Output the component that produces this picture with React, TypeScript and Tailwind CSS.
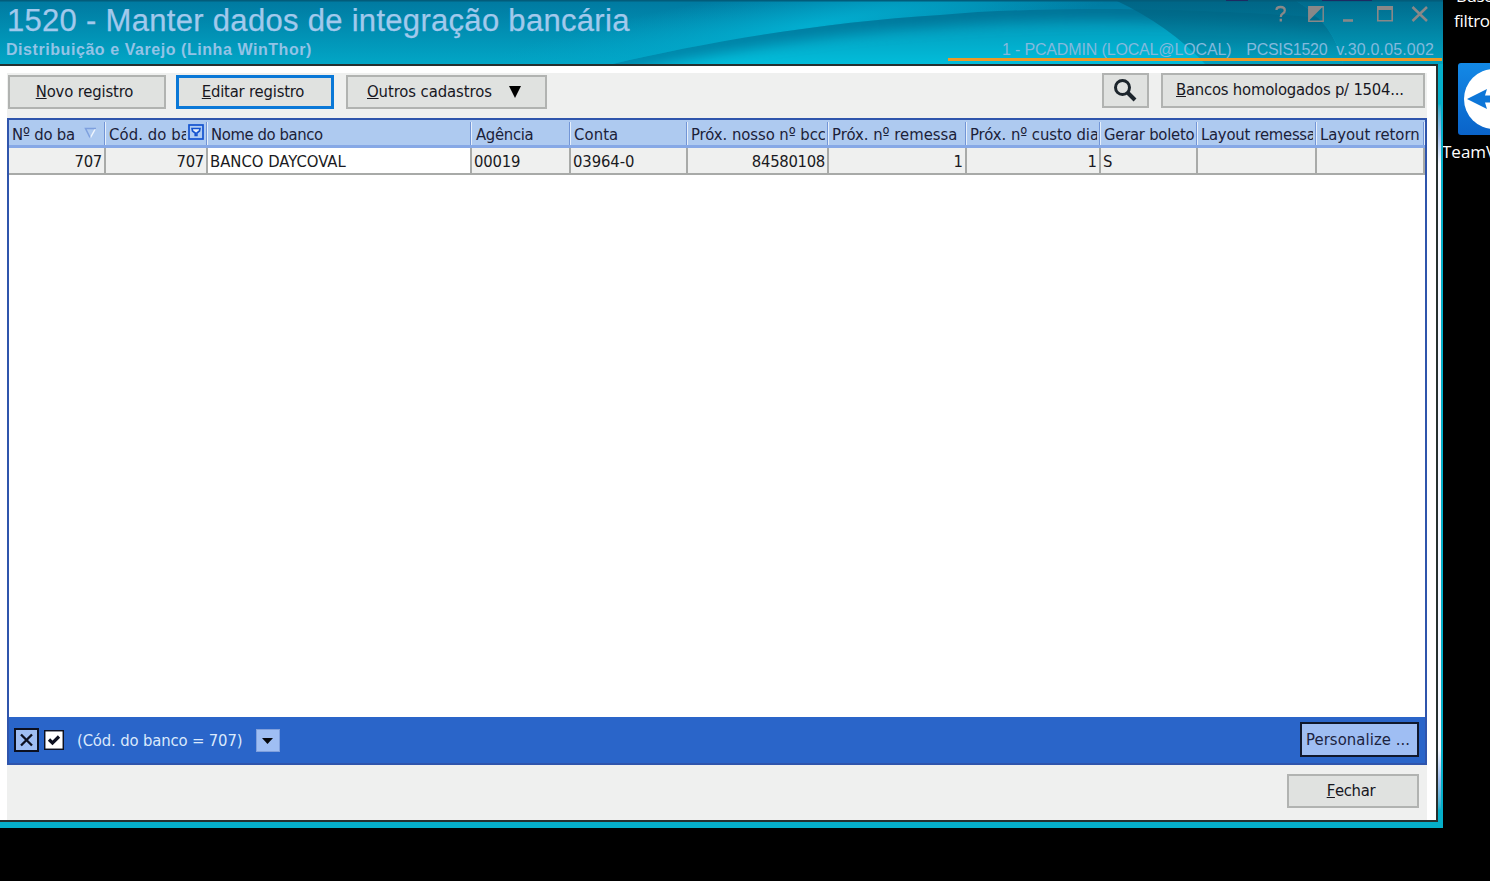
import { ReactNode } from "react";

const ui = "font-['DejaVu_Sans_Condensed','DejaVu_Sans',sans-serif] [font-stretch:condensed] text-[16.5px] whitespace-pre leading-[20px]";

function Button({ className, children }: { className: string; children: ReactNode }) {
  return (
    <button className={`flex items-center box-border bg-[#e0e2e0] pb-px text-[#17171f] ${ui} ${className}`}>
      {children}
    </button>
  );
}

type Column = { title: string; value: string; cell: string; head: string; row: string; icon?: "sort" | "filter" };

const columns: Column[] = [
  { title: "Nº do ba", value: "707", cell: "w-[97px]", head: "mr-[3px] tracking-[-0.2px]", row: "justify-end bg-[#eff0ef] tracking-[-0.3px]", icon: "sort" },
  { title: "Cód. do ba", value: "707", cell: "w-[102px]", head: "mr-[20px] tracking-[0.1px]", row: "justify-end bg-[#eff0ef] tracking-[-0.3px]", icon: "filter" },
  { title: "Nome do banco", value: "BANCO DAYCOVAL", cell: "w-[264px]", head: "mr-[3px] tracking-[-0.4px]", row: "bg-white" },
  { title: "Agência", value: "00019", cell: "w-[99px]", head: "mr-[3px] pl-[4px] tracking-[-0.3px]", row: "bg-[#eff0ef] tracking-[-0.2px]" },
  { title: "Conta", value: "03964-0", cell: "w-[117px]", head: "mr-[3px] tracking-[0.1px]", row: "bg-[#eff0ef] tracking-[-0.1px]" },
  { title: "Próx. nosso nº bcc", value: "84580108", cell: "w-[141px]", head: "mr-[2px] tracking-[-0.05px]", row: "justify-end bg-[#eff0ef] tracking-[-0.3px]" },
  { title: "Próx. nº remessa", value: "1", cell: "w-[138px]", head: "mr-[3px] tracking-[0px]", row: "justify-end bg-[#eff0ef]" },
  { title: "Próx. nº custo dia", value: "1", cell: "w-[134px]", head: "mr-[2px] tracking-[-0.05px]", row: "justify-end bg-[#eff0ef]" },
  { title: "Gerar boleto", value: "S", cell: "w-[97px]", head: "mr-[1px] tracking-[-0.25px]", row: "bg-[#eff0ef]" },
  { title: "Layout remessa", value: "", cell: "w-[119px]", head: "mr-[2px] tracking-[-0.25px]", row: "bg-[#eff0ef]" },
  { title: "Layout retorn", value: "", cell: "w-[108px]", head: "mr-[2px] tracking-[-0.05px]", row: "bg-[#eff0ef]" },
];

const crest = "M600 67C690 45 820 22 940 15C1030 7 1150 8 1230 12Q1350 17 1443 32";

function TitleBackdrop() {
  return (
    <svg className="absolute inset-0" width="1443" height="64" viewBox="0 0 1443 64" preserveAspectRatio="none">
      <defs>
        <linearGradient id="base" x1="0" y1="0" x2="0" y2="1">
          <stop offset="0" stopColor="#0079a0" />
          <stop offset="1" stopColor="#02a6c6" />
        </linearGradient>
        <radialGradient id="glow" gradientUnits="userSpaceOnUse" cx="0" cy="0" r="1" gradientTransform="translate(810 26) rotate(-9) scale(360 42)">
          <stop offset="0" stopColor="#02aed0" />
          <stop offset="1" stopColor="#02a2c6" stopOpacity="0" />
        </radialGradient>
        <linearGradient id="swoosh" x1="0" y1="0" x2="0" y2="1">
          <stop offset="0" stopColor="#0290b2" />
          <stop offset="1" stopColor="#02bfdc" />
        </linearGradient>
        <linearGradient id="shade" x1="0" y1="0" x2="1" y2="0">
          <stop offset="0" stopColor="#0088ac" />
          <stop offset="0.4" stopColor="#007498" />
          <stop offset="1" stopColor="#006a8c" />
        </linearGradient>
        <linearGradient id="deep" x1="0" y1="0" x2="0" y2="1">
          <stop offset="0" stopColor="#00607f" stopOpacity="0.8" />
          <stop offset="0.6" stopColor="#00708f" stopOpacity="0.65" />
          <stop offset="1" stopColor="#028aa8" stopOpacity="0.5" />
        </linearGradient>
        <linearGradient id="corner" x1="0" y1="0" x2="0" y2="1">
          <stop offset="0" stopColor="#006a8c" />
          <stop offset="1" stopColor="#02a2c0" />
        </linearGradient>
        <clipPath id="ridgeClip"><path d={`${crest}V67Z`} /></clipPath>
        <filter id="soft" filterUnits="userSpaceOnUse" x="560" y="-30" width="940" height="130"><feGaussianBlur stdDeviation="7" /></filter>
      </defs>
      <rect width="1443" height="64" fill="url(#base)" />
      <path d="M440 0H1443V64H440Z" fill="url(#glow)" />
      <path d={`${crest}V67Z`} fill="url(#swoosh)" />
      <g clipPath="url(#ridgeClip)">
        <path d={crest} fill="none" stroke="url(#shade)" strokeWidth="20" filter="url(#soft)" />
      </g>
      <path d="M1115 0H1295Q1335 24 1343 64H1205Q1170 26 1115 0Z" fill="url(#deep)" />
      <path d="M1295 0H1443V64H1343Q1335 24 1295 0Z" fill="url(#corner)" />
      <path d="M0 0.5H1443" stroke="#035c7a" strokeWidth="2" />
      <path d="M1226 0.5H1248M1322 0.5H1372" stroke="#1c2a62" />
    </svg>
  );
}

function WindowControls() {
  return (
    <svg className="absolute left-[1270px] top-0" width="166" height="28" viewBox="0 0 166 28" fill="none" stroke="#8a8888">
      <path d="M6.5 10Q6.5 7 10.5 7Q14.8 7 14.8 10.4Q14.8 12.5 12.5 13.8Q10.8 14.8 10.8 17M10.8 18.8V21.5" strokeWidth="2.3" />
      <path d="M38.8 6.8H53.2V21.2H38.8Z" strokeWidth="1.4" />
      <path d="M38.5 6.5H53L38.5 21Z" fill="#8a8888" stroke="none" />
      <path d="M73 20.5H83" strokeWidth="2.6" />
      <path d="M107.8 7V20.8H122.2V7" strokeWidth="1.6" />
      <path d="M107 8H123" strokeWidth="4" />
      <path d="M142.500 7L157 21M157 7L142.500 21" strokeWidth="2.5" />
    </svg>
  );
}

function SortIcon() {
  return (
    <svg className="absolute left-[75px] top-[7px]" width="13" height="12" viewBox="0 0 13 12" fill="none">
      <path d="M11.500 1.500L6.500 10.500" stroke="#eef4fd" strokeWidth="1.5" />
      <path d="M6 10.500L1.500 1.500H12" stroke="#7ea0de" strokeWidth="1.5" />
    </svg>
  );
}

function FilterIcon() {
  return (
    <svg className="absolute left-[82px] top-[4px]" width="16" height="16" viewBox="0 0 16 16" fill="none" stroke="#1453cf">
      <rect x="1" y="1" width="14" height="14" fill="#b0cdf4" strokeWidth="1.7" />
      <path d="M4 4.500H12L11.500 7L8.900 9V11.500H7.200V9L4.500 7Z" fill="#e7f0fb" strokeWidth="1.6" />
    </svg>
  );
}

export default function App() {
  return (
    <div className="flex h-[881px] w-[1490px] overflow-hidden bg-black">
      <main className="flex h-[828px] w-[1443px] shrink-0 flex-col bg-[#05afca]">
        <header className="relative h-[64px] shrink-0 overflow-hidden font-['Liberation_Sans',sans-serif] text-[#a2c9ec]">
          <TitleBackdrop />
          <div className="relative flex h-full flex-col pl-[6px] pt-[2px]">
            <h1 className="h-[39px] whitespace-pre pl-px text-[31px] leading-[37px] tracking-[0.3px] [-webkit-text-stroke:0.25px_#a2c9ec]">1520 - Manter dados de integração bancária</h1>
            <div className="flex h-[18px] pr-[9px] leading-[18px]">
              <span className="whitespace-pre text-[16px] font-bold tracking-[0.56px] text-[#93c3e6]">Distribuição e Varejo (Linha WinThor)</span>
              <span className="ml-auto whitespace-pre text-[16px] tracking-[-0.15px] text-[#84b9dd]">1 - PCADMIN (LOCAL@LOCAL)</span>
              <span className="ml-[15px] whitespace-pre text-[16px] tracking-[-0.3px] text-[#84b9dd]">PCSIS1520</span>
              <span className="ml-[9px] whitespace-pre text-[16px] tracking-[0.15px] text-[#84b9dd]">v.30.0.05.002</span>
            </div>
          </div>
          <WindowControls />
          <div className="absolute left-[948px] top-[58px] h-[3px] w-[494px] bg-[#ec9a27]" />
        </header>

        <div className="flex h-[758px]">
          <div className="flex w-[1438px] shrink-0 flex-col border-y-2 border-r-2 border-[#26302f] bg-white pl-[7px] pr-[9px] pt-[7px]">
            <div className="flex min-h-0 flex-1 flex-col bg-[#eff0ef]">
              <div className="flex h-[45px] shrink-0 items-start pl-px pr-[2px]">
                <Button className="mt-[2px] h-[34px] w-[158px] justify-center border-2 border-[#b1b3b1] pr-[5px] tracking-[-0.15px]"><u>N</u>ovo registro</Button>
                <Button className="ml-[10px] mt-[2px] h-[34px] w-[158px] justify-center border-[3px] border-[#0a78d7] pr-1 tracking-[-0.2px]"><u>E</u>ditar registro</Button>
                <Button className="ml-[12px] mt-[2px] h-[34px] w-[201px] border-2 border-[#b1b3b1] pl-[19px] tracking-[-0.08px]">
                  <span className="w-[142px] text-left"><u>O</u>utros cadastros</span>
                  <svg width="12" height="12" viewBox="0 0 12 12"><path d="M0 0H12L6 12Z" fill="#000" /></svg>
                </Button>
                <Button className="ml-auto h-[35px] w-[47px] justify-center border-2 border-[#b1b3b1] pr-[2px]">
                  <svg width="24" height="24" viewBox="0 0 24 24" fill="none" stroke="#1c252c">
                    <circle cx="9.500" cy="9.500" r="7" strokeWidth="3" />
                    <path d="M14.500 14.500L22 22" strokeWidth="4" />
                  </svg>
                </Button>
                <Button className="ml-[12px] h-[35px] w-[264px] border-2 border-[#b1b3b1] pl-[13px] tracking-[-0.22px]"><span><u>B</u>ancos homologados p/ 1504...</span></Button>
              </div>

              <section className="flex h-[647px] shrink-0 flex-col border-2 border-[#2f55ac] bg-white">
                <div className="flex h-[28px] shrink-0 border-b-[3px] border-[#86a8e6] bg-[#aecaf0]">
                  {columns.map((c) => (
                    <div key={c.title} className={`relative flex shrink-0 pt-[2px] ${c.cell}`}>
                      <div className={`flex-1 overflow-hidden pl-[3px] pt-[3px] text-[#1b2138] ${ui} ${c.head}`}>{c.title}</div>
                      {c.icon === "sort" && <SortIcon />}
                      {c.icon === "filter" && <FilterIcon />}
                      <div className="h-[23px] w-px shrink-0 bg-[#7295d6]" />
                      <div className="h-[23px] w-px shrink-0 bg-[#e6effb]" />
                    </div>
                  ))}
                </div>
                <div className="flex h-[27px] shrink-0 border-b-2 border-[#a8aaa8]">
                  {columns.map((c) => (
                    <div key={c.title} className={`flex shrink-0 items-center border-r-2 border-[#a8aaa8] px-[2px] pt-[2px] text-[#1a1a22] ${ui} ${c.cell} ${c.row}`}>{c.value}</div>
                  ))}
                </div>
                <div className="flex-1" />
                <div className="flex h-[46px] shrink-0 items-center bg-[#2a65c9] pl-[5px] pr-[6px]">
                  <svg width="26" height="24" viewBox="0 0 26 24" fill="none" stroke="#0c1020">
                    <rect x="1" y="1" width="23" height="22" fill="#9fbef3" strokeWidth="2" />
                    <path d="M7 6.500L18 17.500M18 6.500L7 17.500" strokeWidth="2.3" />
                  </svg>
                  <svg className="ml-[4px]" width="20" height="20" viewBox="0 0 20 20" fill="none" stroke="#0c1020">
                    <rect x="0.700" y="0.700" width="18.600" height="18.600" fill="#fff" strokeWidth="1.5" />
                    <path d="M5 9.500L8.500 13L15 6.500" strokeWidth="3.2" />
                  </svg>
                  <span className={`ml-[13px] w-[166px] pt-[2px] text-[#dbe9fc] tracking-[-0.15px] ${ui}`}>(Cód. do banco = 707)</span>
                  <svg className="ml-[13px]" width="24" height="23" viewBox="0 0 24 23">
                    <rect x="0.500" y="0.500" width="23" height="22" fill="#9fbef3" stroke="#7f9fdc" />
                    <path d="M6 9H17L11.500 15Z" fill="#05070c" />
                  </svg>
                  <button className={`mb-px ml-auto h-[35px] w-[119px] border-2 border-[#10182c] bg-[#9fbef3] pl-[4px] text-left text-[#1b2340] tracking-[0.08px] ${ui}`}>Personalize ...</button>
                </div>
              </section>

              <footer className="flex flex-1 items-start justify-end pr-[8px] pt-[9px]">
                <Button className="h-[34px] w-[132px] justify-center border-2 border-[#b1b3b1] pr-1 tracking-[-0.3px]"><u>F</u>echar</Button>
              </footer>
            </div>
          </div>
          <div className="flex w-[3px] flex-col">
            <div className="h-[40px]" />
            <div className="h-[60px] bg-linear-to-b from-[#05afca] via-[#9fbdee] to-[#f4f8ff]" />
            <div className="flex-1 bg-[#f4f8ff]" />
            <div className="h-[60px] bg-linear-to-b from-[#f4f8ff] via-[#9fbdee] to-[#05afca]" />
            <div className="h-[12px]" />
          </div>
        </div>
      </main>

      <aside className="relative w-[47px] overflow-hidden font-['Open_Sans',sans-serif] text-[17px] leading-[22px] text-white">
        <div className="absolute left-[13px] top-[-15px] whitespace-pre tracking-[-0.5px]">Busc</div>
        <div className="absolute left-[11px] top-[10px] whitespace-pre tracking-[-0.3px]">filtro</div>
        <svg className="absolute left-[15px] top-[63px]" width="32" height="72" viewBox="0 0 32 72">
          <defs>
            <linearGradient id="tv" x1="0" y1="0" x2="0" y2="1">
              <stop offset="0" stopColor="#1389e6" />
              <stop offset="1" stopColor="#0a63c9" />
            </linearGradient>
          </defs>
          <rect width="72" height="72" rx="3" fill="url(#tv)" />
          <circle cx="36" cy="36" r="30" fill="#fff" />
          <path d="M9 36L29 26L27 32.500H36V39.500H27L29 46Z" fill="#0d76d8" />
        </svg>
        <div className="absolute left-[-1px] top-[141px] whitespace-pre">TeamV</div>
      </aside>
    </div>
  );
}
